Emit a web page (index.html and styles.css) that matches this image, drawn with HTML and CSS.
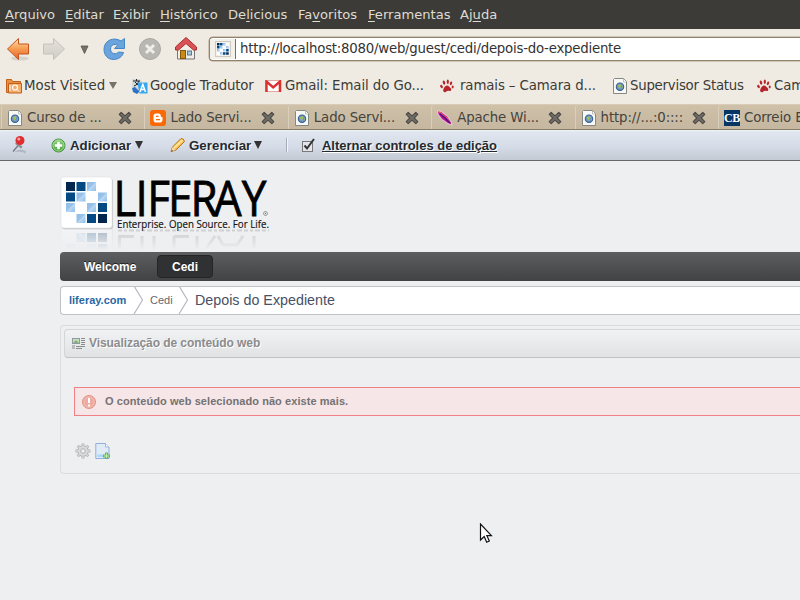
FILE: index.html
```html
<!DOCTYPE html>
<html lang="pt-BR">
<head>
<meta charset="utf-8">
<title>Depois do Expediente - Liferay</title>
<link rel="stylesheet" href="styles.css">
</head>
<body>
<svg class="defs" width="0" height="0" aria-hidden="true">
  <defs>
    <linearGradient id="orange" x2="0" y2="1"><stop stop-color="#ffe0ad"/><stop offset=".5" stop-color="#f59b50"/><stop offset="1" stop-color="#e8602c"/></linearGradient>
    <linearGradient id="gray" x2="0" y2="1"><stop stop-color="#e4e1da"/><stop offset="1" stop-color="#d0cdc6"/></linearGradient>
    <linearGradient id="green" x2="0" y2="1"><stop stop-color="#8fd07e"/><stop offset="1" stop-color="#47a23a"/></linearGradient>
    <linearGradient id="tile" x2="1" y2="1"><stop stop-color="#8fbbe6"/><stop offset=".49" stop-color="#9bc4ea"/><stop offset=".51" stop-color="#bedaf3"/><stop offset="1" stop-color="#8fbde8"/></linearGradient>
    <symbol id="page" viewBox="0 0 14 16"><path d="M1.500.5h9l3 3v12h-13V1.500z" fill="#f8f8f6" stroke="#858781"/><path d="M10.500 1v3h3" fill="#fff" stroke="#aaa" stroke-width=".7"/><circle cx="7" cy="8.700" r="3.700" fill="#6795c7" stroke="#3a5f96" stroke-width="1.100"/><path d="M4.600 7.500l3-1.400 1 1.600-1.400 1.400.5 2-1.600-.8zM9 8.500l1 .4-.8 1.800z" fill="#a9bf4d"/></symbol>
    <symbol id="close" viewBox="0 0 14 14"><path d="M3.200 1.300 7 4.800l3.800-3.500 2 2L9.200 7l3.600 3.700-2 2L7 9.200l-3.800 3.500-2-2L4.800 7 1.200 3.300z" fill="#706d67" stroke="#4d4b47" stroke-width="1.100" stroke-linejoin="round"/></symbol>
    <symbol id="paw" viewBox="0 0 14 14"><g fill="#b5262c"><path d="M7 6.500c2 0 2.300 1.500 3.600 2.500 1.500 1.200.4 3.500-1.400 3-1.300-.4-2.500.2-3.400.9-1.600.9-3.300-.6-2.500-2.400C4 9 4.800 6.500 7 6.500z"/><ellipse cx="1.500" cy="7.500" rx="1.200" ry="1.700" transform="rotate(-30 1.500 7.500)"/><ellipse cx="4" cy="3.600" rx="1.200" ry="2.100" transform="rotate(-15 4 3.600)"/><ellipse cx="7.800" cy="2.700" rx="1.100" ry="2.200"/><ellipse cx="11" cy="4.300" rx="1.100" ry="1.900" transform="rotate(20 11 4.300)"/><ellipse cx="12.700" cy="8" rx="1" ry="1.400"/></g></symbol>
    <symbol id="tiles" viewBox="0 0 42 42"><path fill="#01264e" d="M0 0h9v9H0zM32 32h9v9h-9z"/><path fill="#034a84" d="M10.500 0h9v9h-9zM0 10.500h9v9H0zM32 21h9v9h-9zM21 32h9v9h-9z"/><g fill="url(#tile)"><rect x="21" width="9" height="9"/><rect x="10.500" y="10.500" width="9" height="9"/><rect x="32" y="10.500" width="9" height="9"/><rect y="21" width="9" height="9"/><rect x="21" y="21" width="9" height="9"/><rect x="10.500" y="32" width="9" height="9"/></g></symbol>
  </defs>
</svg>

<nav class="menubar">
  <span class="m1"><u>A</u>rquivo</span><span class="m2"><u>E</u>ditar</span><span class="m3">E<u>x</u>ibir</span><span class="m4"><u>H</u>istórico</span><span class="m5">De<u>l</u>icious</span><span class="m6">Fa<u>v</u>oritos</span><span class="m7"><u>F</u>erramentas</span><span class="m8">Aj<u>u</u>da</span>
</nav>

<div class="toolbar">
  <svg class="nav-icons" width="202" height="40" viewBox="0 0 202 40">
    <ellipse cx="20" cy="29.500" rx="9" ry="2" fill="#999" opacity=".3"/>
    <path d="M7.500 20 18.500 9.500v5.500h10v10h-10v5.500z" fill="url(#orange)" stroke="#c45420" stroke-linejoin="round"/>
    <path d="M64.500 20 53.500 9.500v5.500h-10v10h10v5.500z" fill="url(#gray)" stroke="#c4c1b8" stroke-linejoin="round"/>
    <path d="M81 17h7l-3.500 7.500z" fill="#75726b" stroke="#55534e" stroke-width=".8"/>
    <path d="M124.500 9.500v10h-10l3-3.300c-3-2-7 0-7 3.800 0 5 6 6 8 3l5 .5c-1 4-5 7-10 7-6 0-9.500-4.500-9.500-10.300 0-8.500 9.500-13 17-8.200z" fill="#6ba3dc" stroke="#4687c7" stroke-linejoin="round"/>
    <circle cx="150" cy="20" r="10.500" fill="#b9b7b2" stroke="#aaa8a3"/><path d="M146 16l8 8m0-8-8 8" stroke="#f1eee8" stroke-width="3"/>
    <path d="M177.500 19 186 12l8.500 7v11h-17z" fill="#f0eee9" stroke="#777"/><rect x="180.500" y="21.500" width="5" height="8" fill="#c68c17" stroke="#875806"/><rect x="187.500" y="22" width="4" height="4" fill="#a5c9de" stroke="#66777e"/>
    <path d="M186 8.500l10.500 9.500v3h-3l-7.500-6.500-7.500 6.500h-3v-3z" fill="#d95356" stroke="#ae2b30"/>
  </svg>
  <div class="urlbox">
    <span class="site"><svg width="12" height="12"><use href="#tiles"/></svg></span>
    <span class="url">http://localhost:8080/web/guest/cedi/depois-do-expediente</span>
  </div>
</div>

<div class="bookmarks">
  <div class="bm b1"><svg width="16" height="16" viewBox="0 0 16 16"><path d="M.5 1.500h5l1 2h8v11H.5z" fill="#e99043" stroke="#c2601b"/><path d="M2.500 5.500h13v9.500h-13z" fill="#f3ad69" stroke="#c2601b"/><circle cx="9" cy="9.500" r="2.500" fill="none" stroke="#fff" stroke-width="1.200"/><path d="M11 11.500l2 2M4 7v6" stroke="#fff"/></svg><span>Most Visited</span><i class="arrow"></i></div>
  <div class="bm b2"><svg width="16" height="16" viewBox="0 0 16 16"><path d="M0 1h8l2 3v8H3L0 8z" fill="#d5d9d8"/><path d="M1 3h7M4.500 1v2M2 8c3-1 4-3 5-5M3 4l4 4" stroke="#222" fill="none"/><path d="M0 10l3-1 3 3 2 1-3 3-4-2z" fill="#2d72c4"/><path d="M5.500 4.500h10v11h-8z" fill="#35a7ef"/><path d="M8 14l2.800-7.500L13.500 14M9 11.500h3.500" stroke="#fff" stroke-width="1.500" fill="none"/></svg><span>Google Tradutor</span></div>
  <div class="bm b3"><svg width="17" height="12" viewBox="0 0 17 12"><path d="M.5.500h15.500v11H.5z" fill="#fff" stroke="#e3a6a0"/><path d="M1.500 12V1.500l6.700 6 6.700-6V12" fill="none" stroke="#dc302f" stroke-width="2.400"/></svg><span>Gmail: Email do Go...</span></div>
  <div class="bm b4"><svg width="14" height="14"><use href="#paw"/></svg><span>ramais – Camara d...</span></div>
  <div class="bm b5"><svg width="14" height="16"><use href="#page"/></svg><span>Supervisor Status</span></div>
  <div class="bm b6"><svg width="14" height="14"><use href="#paw"/></svg><span>Camara</span></div>
</div>

<div class="tabs">
  <div class="tab"><svg width="16" height="16"><use href="#page"/></svg><span>Curso de ...</span><svg class="x" width="14" height="14"><use href="#close"/></svg></div>
  <div class="tab"><svg width="16" height="16" viewBox="0 0 16 16"><rect width="16" height="16" rx="3" fill="#fb6806"/><path d="M6 3.500h2.500a2.300 2.300 0 0 1 2.300 2.300c0 1 .3 1.200 1.700 1.400v2.500a2.800 2.800 0 0 1-2.800 2.800H6.300a2.800 2.800 0 0 1-2.800-2.800V6A2.500 2.500 0 0 1 6 3.500z" fill="#fff"/><path d="M6 6.300h2.500M6 9.700h4" stroke="#fb6806" stroke-width="1.300"/></svg><span>Lado Servi...</span><svg class="x" width="14" height="14"><use href="#close"/></svg></div>
  <div class="tab"><svg width="16" height="16"><use href="#page"/></svg><span>Lado Servi...</span><svg class="x" width="14" height="14"><use href="#close"/></svg></div>
  <div class="tab"><svg width="16" height="16" viewBox="0 0 16 16"><path d="M.5 1 4 1.500l6.500 5L14 12l1 3-4-1.500-6.500-4.500L1 4z" fill="#c0149c" stroke="#fff" stroke-width=".6"/><path d="M1 1.500l3 1.500 6 5 3 4.500" stroke="#f06052" fill="none"/><path d="M3 4l5 4 5 5" stroke="#48117f" stroke-width="1.500" fill="none"/></svg><span>Apache Wi...</span><svg class="x" width="14" height="14"><use href="#close"/></svg></div>
  <div class="tab"><svg width="16" height="16"><use href="#page"/></svg><span>http://...:0::::</span><svg class="x" width="14" height="14"><use href="#close"/></svg></div>
  <div class="tab"><b class="cb">CB</b><span>Correio Br...</span></div>
</div>

<div class="dock">
  <svg class="pin" width="18" height="20" viewBox="0 0 18 20"><path d="M3 17q6-4.500 12-1l-1 3q-1-3-11-2z" fill="#a4abb5" opacity=".7"/><path d="M7.500 10 2 16.500" stroke="#77797e" stroke-width="1.300"/><path d="M5.500 8.500 10 12" stroke="#8f9298" stroke-width="2.500" stroke-linecap="round"/><circle cx="9" cy="5.500" r="4.500" fill="#e02d31"/><circle cx="7.800" cy="4" r="1.500" fill="#f8a4a4"/></svg>
  <div class="action add"><svg width="15" height="15" viewBox="0 0 15 15"><circle cx="7.500" cy="7.500" r="6.500" fill="url(#green)" stroke="#429239"/><circle cx="7.500" cy="7.500" r="5.500" fill="none" stroke="#c0e6b8" stroke-width=".7"/><path d="M7.500 3.800v7.400M3.800 7.500h7.400" stroke="#fff" stroke-width="2.600"/></svg><b>Adicionar</b><i class="arrow dark"></i></div>
  <div class="action manage"><svg width="16" height="16" viewBox="0 0 16 16"><path d="M1 14.500 2.500 10 11 1.500q2.500-.5 3.500 3L6 13z" fill="#f6bd50" stroke="#b87513" stroke-linejoin="round"/><path d="M4 11 12.500 3" stroke="#ffe49f" stroke-width="2"/><path d="M1 14.500 2.500 10l3 3z" fill="#f5d6aa"/><path d="M1 14.800l.8-2 1.300 1.300z" fill="#6b452e"/></svg><b>Gerenciar</b><i class="arrow dark"></i></div>
  <div class="action toggle"><svg width="14" height="16" viewBox="0 0 14 16"><rect x=".5" y="4.500" width="10" height="10" fill="#e2e5ea" stroke="#777"/><path d="M2.500 8.500 5 11.500 12 2" fill="none" stroke="#333" stroke-width="2"/></svg><b>Alternar controles de edição</b></div>
</div>

<main>
  <svg class="logo" width="212" height="75" viewBox="60 176 212 75">
    <defs>
      <linearGradient id="fade" gradientUnits="userSpaceOnUse" x1="0" y1="229" x2="0" y2="250"><stop stop-color="#fff" stop-opacity=".28"/><stop offset="1" stop-color="#fff" stop-opacity="0"/></linearGradient>
      <mask id="fadeMask" maskUnits="userSpaceOnUse" x="60" y="229" width="212" height="22"><rect x="60" y="229" width="212" height="22" fill="url(#fade)"/></mask>
    </defs>
    <g id="emblem">
      <rect x="62" y="178.500" width="51" height="51" rx="3" fill="#c9cacc"/><rect x="61" y="177" width="51" height="51" rx="3" fill="#fff" stroke="#dadbdc" stroke-width=".5"/>
      <use href="#tiles" x="66" y="182" width="42" height="42"/>
    </g>
    <text class="wordmark" transform="translate(113.500 216) scale(.9 1)" x="0 24.500 37.500 60.500 85.500 111.500 142.500" y="0">LIFERAY</text>
    <text class="tagline" x="117" y="227.500" textLength="152" lengthAdjust="spacingAndGlyphs">Enterprise. Open Source. For Life.</text>
    <g mask="url(#fadeMask)">
      <use href="#emblem" transform="matrix(1 0 0 -1 0 456)"/>
      <g fill="none" stroke="#000" opacity=".5"><path d="M119.500 236v14M118 236.500h16M142 236v14M154 236v14M174 236v14M174 236.500h15M197 236v14M206 249l9-13M218 236l5 9h14l6-9M254 236v12" stroke-width="3"/>
      <path d="M118 230.500h151" stroke-width="2" stroke-dasharray="4 2 3 2 5 2"/></g>
    </g>
    <circle cx="265.500" cy="213.500" r="2" fill="none" stroke="#666" stroke-width=".6"/><circle cx="265.500" cy="213.500" r=".7" fill="#777"/>
  </svg>
  <nav class="sitenav"><b class="welcome">Welcome</b><b class="current">Cedi</b></nav>
  <div class="crumbs"><b>liferay.com</b><svg width="12" height="28" viewBox="0 0 12 28"><path d="M1 0l8.500 14L1 28" fill="none" stroke="#b6bac0" stroke-width="1.200"/></svg><span class="mid">Cedi</span><svg width="12" height="28" viewBox="0 0 12 28"><path d="M1 0l8.500 14L1 28" fill="none" stroke="#b6bac0" stroke-width="1.200"/></svg><span class="last">Depois do Expediente</span></div>
  <section class="portlet">
    <header><svg width="14" height="13" viewBox="0 0 14 13"><rect x=".5" y="1.500" width="7" height="5" fill="#c3e0bd" stroke="#929aa0"/><path d="M1 6l3-3 3 3z" fill="#82b27b"/><path d="M9 1.500h4M9 3.500h4M9 5.500h4M9 7.500h4M4 9.500h9M4 11.500h6" stroke="#8b8b8b"/><rect y="8" width="3" height="4" fill="#bbb"/></svg><b>Visualização de conteúdo web</b></header>
    <div class="error"><svg width="14" height="14" viewBox="0 0 14 14"><circle cx="7" cy="7" r="6.500" fill="#ecaaa0" stroke="#e39184"/><circle cx="7" cy="7" r="5" fill="none" stroke="#f4c7bf" stroke-width=".7"/><path d="M7 3v5M7 9.500v2" stroke="#fff" stroke-width="2"/></svg><b>O conteúdo web selecionado não existe mais.</b></div>
    <div class="tools">
      <svg width="16" height="16" viewBox="0 0 16 16"><g stroke="#b1b2b4" stroke-width="2.800"><path d="M8 .5v15M.5 8h15M2.700 2.700l10.600 10.600M13.300 2.700 2.700 13.300"/></g><circle cx="8" cy="8" r="5.300" fill="#d9dadb" stroke="#b3b4b6"/><g stroke="#d7d8d9" stroke-width="1.300"><path d="M8 1v3M8 12v3M1 8h3M12 8h3M3 3l2 2M11 11l2 2M13 3l-2 2M3 13l2-2"/></g><circle cx="8" cy="8" r="2.300" fill="#eeeff1" stroke="#b1b2b4"/></svg>
      <svg width="16" height="16" viewBox="0 0 16 16"><path d="M.8.500h9.700l3.500 3.500v11.500H.8z" fill="#e1ebf6" stroke="#8fb0da"/><path d="M10.500.500V4H14" fill="#f8fbff" stroke="#9bb9dd"/><path d="M2.500 11.500h6v2.500h-6z" fill="#a5d9f5"/><path d="M10 9.500h3V11.500h2v3h-2v1.500h-3v-1.500H8v-3h2z" fill="#64b767"/><path d="M11.500 10.500v4.500M9 13h5" stroke="#c5f0ac"/></svg>
    </div>
  </section>
</main>
<svg class="cursor" width="14" height="21" viewBox="0 0 14 21"><path d="M1.500 1v16l3.700-3.500 2.500 5.700 2.600-1.200-2.400-5.300h4.500z" fill="#fff" stroke="#111" stroke-width="1.200"/></svg>
</body>
</html>
```

FILE: styles.css
```css
* { box-sizing: border-box; }
body { margin: 0; width: 800px; height: 600px; overflow: hidden; background: #eeeff1; font-family: "Liberation Sans", Arial, sans-serif; color: #333; white-space: nowrap; }
svg { display: block; flex: none; }
.defs { position: absolute; }

.menubar { display: flex; height: 29px; padding-left: 5px; background: #3c3b37; color: #dfdbd2; font: 13.1px/29px "DejaVu Sans", sans-serif; }
.menubar span { flex: none; }
.menubar u { text-underline-offset: 2px; text-decoration-skip-ink: none; }
.m1 { width: 60px; }
.m2 { width: 48px; }
.m3 { width: 47px; }
.m4 { width: 68px; }
.m5 { width: 70px; }
.m6 { width: 70px; }
.m7 { width: 92px; }

.toolbar { display: flex; height: 40px; background: #efebe3; font-family: "DejaVu Sans", sans-serif; }
.urlbox { flex: none; display: flex; align-items: center; width: 591px; height: 24px; margin: 8px 0 0 7px; border: 1px solid #91836b; border-right: 0; border-radius: 4px 0 0 4px; background: #fff; overflow: hidden; box-shadow: 0 0 0 .5px #b0a58f; }
.site { display: flex; align-items: center; justify-content: center; width: 26px; height: 20px; border-right: 1px solid #777064; background: #f4f1eb; }
.site svg { outline: 1px solid #cfcbc3; outline-offset: 1px; background: #fff; }
.url { margin-left: 4px; font-size: 13.33px; line-height: 22px; letter-spacing: -.24px; }

.bookmarks { display: flex; height: 35px; overflow: hidden; background: #efebe3; font: 13.33px/33px "DejaVu Sans", sans-serif; letter-spacing: -.12px; color: #3c3b37; }
.bm { flex: none; display: flex; height: 33px; align-items: center; }
.b1 { width: 126px; padding-left: 6px; gap: 2px; letter-spacing: 0; }
.b2 { width: 139px; padding-left: 6px; gap: 2px; letter-spacing: -.22px; }
.b3 { width: 175px; gap: 3px; letter-spacing: -.08px; }
.b4 { width: 173px; gap: 6px; }
.b5 { width: 144px; gap: 3px; letter-spacing: -.25px; }
.b6 { gap: 3px; }
.arrow { width: 0; height: 0; border: 4px solid transparent; border-top: 7px solid #75726b; border-bottom: 0; margin-left: 2px; }
.arrow.dark { border-left-width: 4.5px; border-right-width: 4.5px; border-top: 8px solid #333; }

.tabs { display: flex; height: 26px; padding-left: 1px; overflow: hidden; border-top: 1px solid #d8ccb8; border-bottom: 1px solid #897d69; background: linear-gradient(#cfc1a8, #c5b7a0); font: 13.33px/24px "DejaVu Sans", sans-serif; letter-spacing: -.12px; color: #45433e; }
.tab { flex: none; display: flex; align-items: center; width: 143.4px; padding: 2px 0 0 5px; border-left: 1px solid #dbcfbb; border-top-left-radius: 3px; }
.tab span { width: 91px; margin-left: 4px; flex: none; }
.cb { width: 16px; height: 16px; background: #073665; color: #fff; font: bold 12px/16px "Liberation Serif", serif; letter-spacing: -.5px; text-align: center; flex: none; }

.dock { display: flex; align-items: center; height: 31px; background: linear-gradient(#f0f4f8 0, #dfe6ef 2px, #d5dce7 55%, #c3cad4); border-bottom: 1px solid #65696e; color: #252a30; font-size: 13.33px; text-shadow: 1px 1px #fff; }
.pin { margin-left: 11px; }
.action { display: flex; align-items: center; flex: none; }
.add { width: 119px; margin-left: 22px; gap: 4px; letter-spacing: -.05px; }
.manage { width: 116px; gap: 3px; }
.manage .arrow, .add .arrow { margin: 0; }
.toggle { gap: 5px; padding-left: 15px; height: 14px; border-left: 1px solid #a4acb5; box-shadow: inset 1px 0 #f3f5f7; }
.toggle b { text-decoration: underline; font-size: 13px; letter-spacing: -.02px; }
.toggle svg { margin-right: 1px; }

main { padding: 15px 0 0 60px; }
.wordmark { font: 49px "Open Sans", "Noto Sans", sans-serif; fill: #000; stroke: #000; stroke-width: .8px; }
.tagline { font: 10.5px "Open Sans", "Noto Sans", sans-serif; fill: #111; stroke: #111; stroke-width: .15px; }
.sitenav { display: flex; align-items: center; width: 740px; height: 29px; margin-top: 1px; border-radius: 4px 0 0 4px; background: linear-gradient(#5d5e60, #414244); color: #fff; font-size: 12px; text-shadow: 0 -1px #222; }
.welcome { margin-left: 24px; width: 73px; }
.current { width: 56px; height: 23px; border-radius: 4px; background: #303133; border: 1px solid #242526; line-height: 22px; text-align: center; }
.crumbs { display: flex; align-items: center; width: 740px; height: 29px; margin-top: 5px; padding-bottom: 1px; border: 1px solid #bfc2c6; border-right: 0; border-radius: 4px 0 0 4px; background: #fff; color: #616872; font-size: 11px; overflow: hidden; }
.crumbs b { width: 72px; padding-left: 8px; color: #2867a3; }
.mid { width: 33px; padding-left: 5px; }
.last { margin-left: 5px; font-size: 14.3px; color: #475064; }
.portlet { width: 740px; height: 149px; margin-top: 10px; padding: 3px 0 3px 3px; border: 1px solid #dadcde; border-right: 0; border-radius: 4px 0 0 4px; }
.portlet header { display: flex; align-items: center; height: 29px; padding: 0 7px 2px; border: 1px solid #d3d5d7; border-right: 0; border-bottom-color: #bfc1c4; border-radius: 4px 0 0 4px; background: linear-gradient(#f1f2f3, #e1e2e4); color: #8b8c8e; font-size: 12px; letter-spacing: -.07px; gap: 3px; text-shadow: 1px 1px #fff; }
.portlet header svg { margin-top: 2px; }
.error { display: flex; align-items: center; height: 29px; margin: 29px 0 0 10px; padding-left: 7px; gap: 9px; border: 1px solid #ef8185; border-right: 0; background: #f7e6e7; color: #747273; font-size: 11px; letter-spacing: .07px; }
.error b { margin-top: -2px; }
.tools { display: flex; gap: 4px; margin: 27px 0 0 11px; }
.cursor { position: absolute; left: 479px; top: 523px; }
```
